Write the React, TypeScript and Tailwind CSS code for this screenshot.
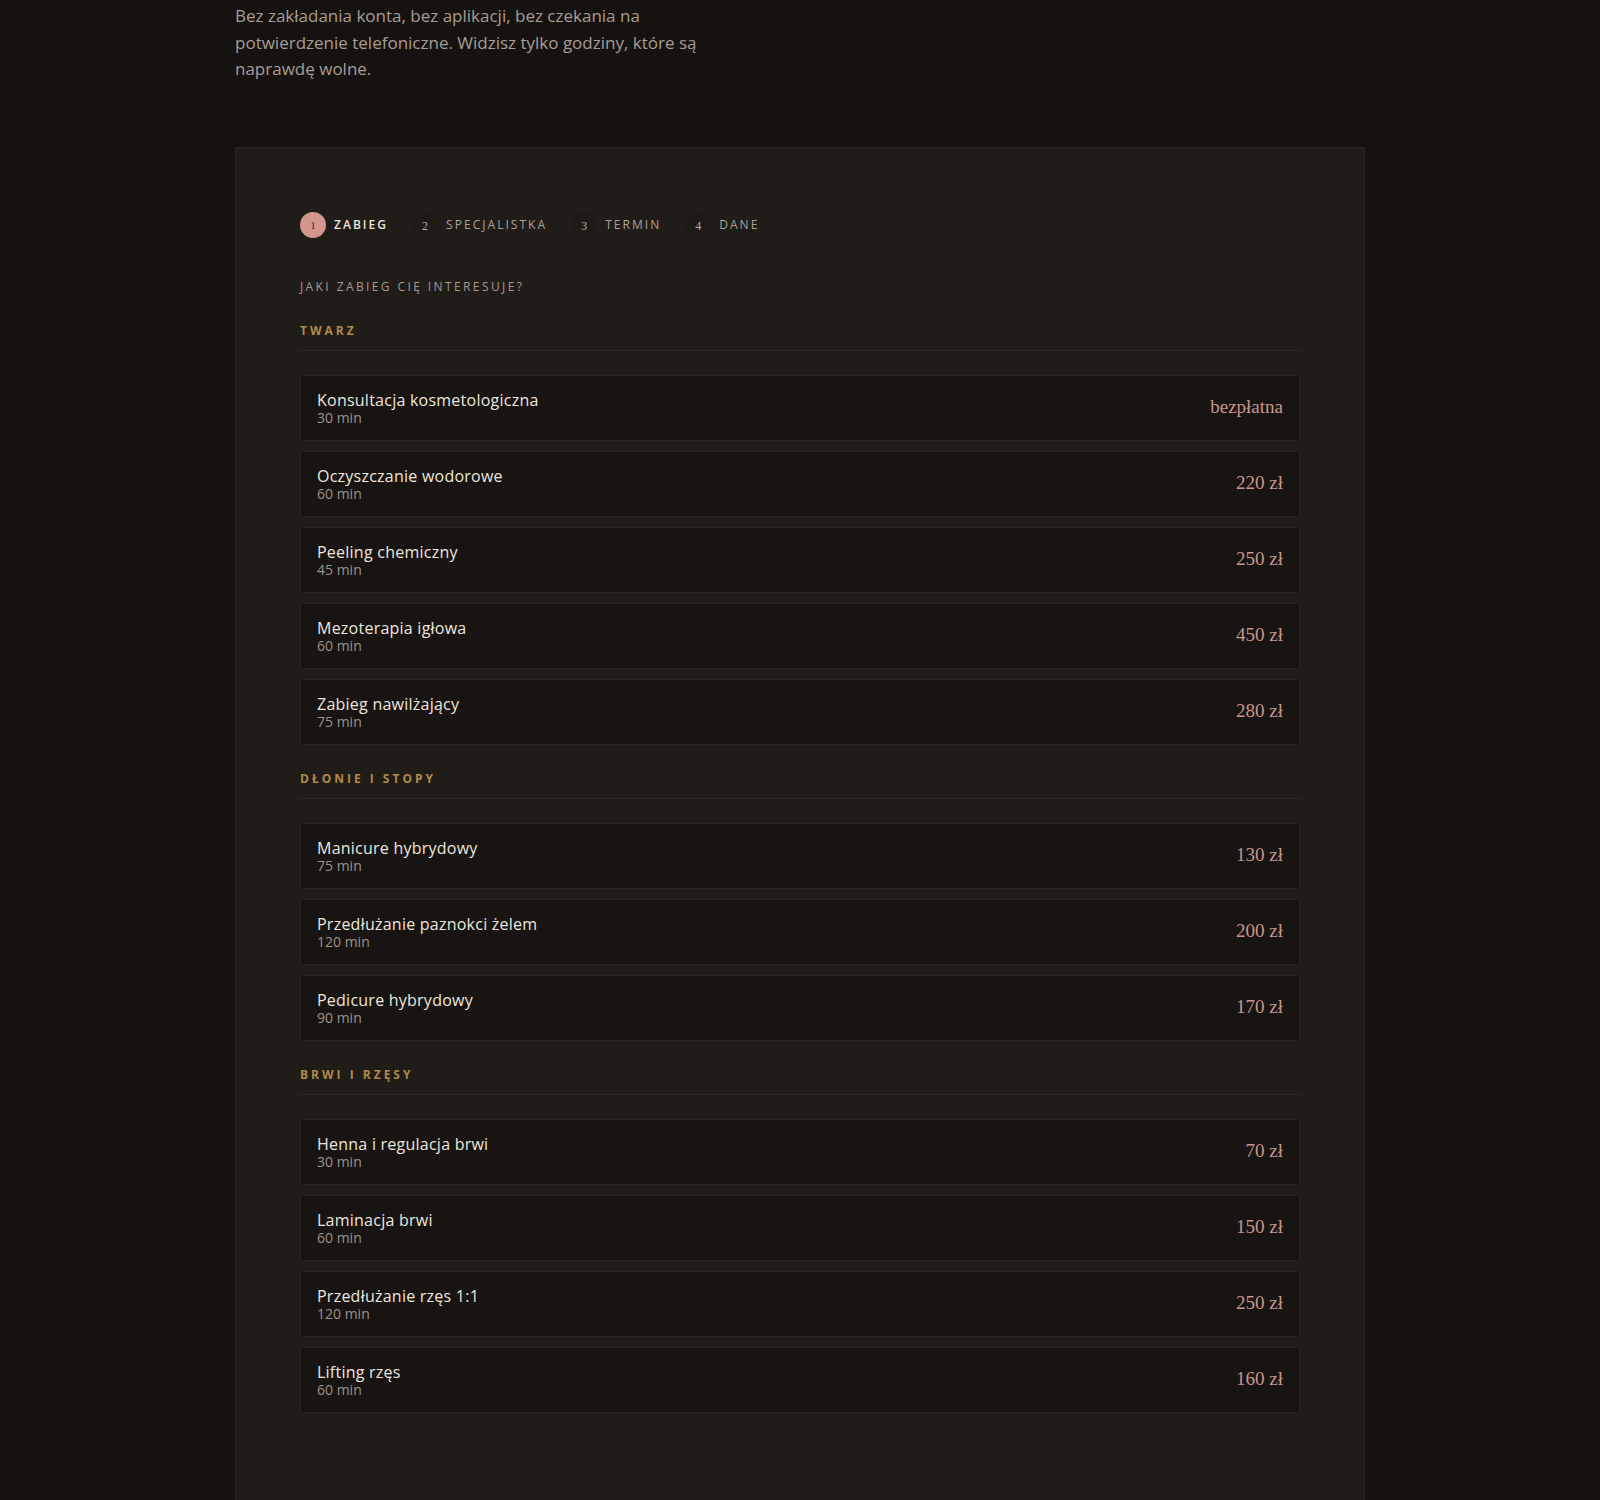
const sections = [
  {
    name: "Twarz",
    items: [
      { title: "Konsultacja kosmetologiczna", duration: "30 min", price: "bezpłatna" },
      { title: "Oczyszczanie wodorowe", duration: "60 min", price: "220 zł" },
      { title: "Peeling chemiczny", duration: "45 min", price: "250 zł" },
      { title: "Mezoterapia igłowa", duration: "60 min", price: "450 zł" },
      { title: "Zabieg nawilżający", duration: "75 min", price: "280 zł" },
    ],
  },
  {
    name: "Dłonie i stopy",
    items: [
      { title: "Manicure hybrydowy", duration: "75 min", price: "130 zł" },
      { title: "Przedłużanie paznokci żelem", duration: "120 min", price: "200 zł" },
      { title: "Pedicure hybrydowy", duration: "90 min", price: "170 zł" },
    ],
  },
  {
    name: "Brwi i rzęsy",
    items: [
      { title: "Henna i regulacja brwi", duration: "30 min", price: "70 zł" },
      { title: "Laminacja brwi", duration: "60 min", price: "150 zł" },
      { title: "Przedłużanie rzęs 1:1", duration: "120 min", price: "250 zł" },
      { title: "Lifting rzęs", duration: "60 min", price: "160 zł" },
    ],
  },
];

const steps = ["Zabieg", "Specjalistka", "Termin", "Dane"];

const sans = "font-['Open_Sans','Noto_Sans',sans-serif]";
const serif = "font-['Liberation_Serif','DejaVu_Serif',serif]";

export default function App() {
  return (
    <div className={`min-h-screen bg-[#16120f] ${sans}`}>
      <div className="mx-auto w-[1130px] pt-[3px] pb-24">
        {/* Intro */}
        <p className="max-w-[480px] text-[17px] leading-[26.5px] text-[#a69d94]">
          Bez zakładania konta, bez aplikacji, bez czekania na potwierdzenie telefoniczne. Widzisz tylko godziny, które są
          naprawdę wolne.
        </p>

        {/* Booking card */}
        <div className="mt-16 border border-[#2a2521] bg-[#201c18] px-16 pt-16 pb-28">
          {/* Steps */}
          <div className="flex items-center gap-6">
            {steps.map((step, i) => (
              <div key={step} className="flex items-center gap-2">
                <div
                  className={
                    i === 0
                      ? `flex h-[26px] w-[26px] items-center justify-center rounded-full bg-[#d2968c] pt-[2px] text-[11px] text-[#3b2320] ${serif}`
                      : `flex h-[26px] w-[26px] items-center justify-center rounded-full bg-[#1e1a16] pt-[2px] text-[12px] text-[#b8aea5] ${serif}`
                  }
                >
                  {i + 1}
                </div>
                <span
                  className={
                    i === 0
                      ? "text-[12px] font-semibold uppercase tracking-[0.17em] text-[#ebe3dc]"
                      : "text-[12px] uppercase tracking-[0.17em] text-[#aba299]"
                  }
                >
                  {step}
                </span>
              </div>
            ))}
          </div>

          <div className="mt-[41px] text-[12px] leading-4 uppercase tracking-[0.2em] text-[#a39a91]">
            Jaki zabieg cię interesuje?
          </div>

          {/* Sections */}
          <div className="mt-7 flex flex-col gap-[26px]">
            {sections.map((section) => (
              <div key={section.name}>
                <div className="border-b border-[#2e2824] pb-[11px] text-[12px] leading-4 font-bold uppercase tracking-[0.25em] text-[#b08a4a]">
                  {section.name}
                </div>
                <div className="mt-6 flex flex-col gap-2.5">
                  {section.items.map((item) => (
                    <button
                      key={item.title}
                      className="flex items-center justify-between border border-[#2a2521] bg-[#181411] px-4 py-[14px] text-left"
                    >
                      <div className="flex flex-col">
                        <span className="text-[16px] leading-5 tracking-[0.015em] text-[#ede6df]">{item.title}</span>
                        <span className="text-[14px] leading-4 text-[#9c938a]">{item.duration}</span>
                      </div>
                      <span className={`text-[19px] text-[#c8968c] ${serif}`}>{item.price}</span>
                    </button>
                  ))}
                </div>
              </div>
            ))}
          </div>
        </div>
      </div>
    </div>
  );
}
